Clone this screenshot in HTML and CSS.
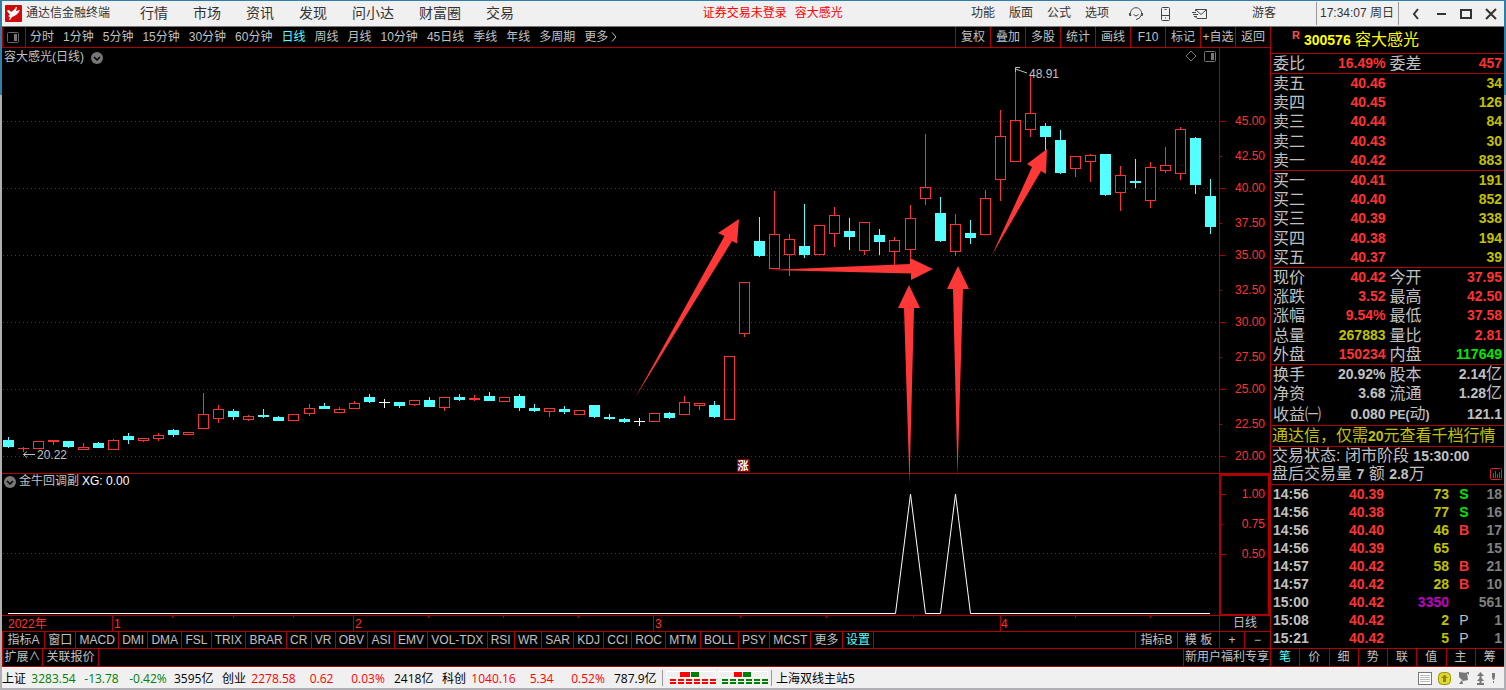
FILE: index.html
```html
<!DOCTYPE html>
<html lang="zh-CN">
<head>
  <meta charset="UTF-8">
  <meta name="viewport" content="width=device-width, initial-scale=1.0">
  <title>通达信金融终端</title>
  <link rel="stylesheet" href="styles.css">
</head>
<body>
  <header class="titlebar">
    <svg class="logo" viewBox="0 0 17 17" width="17" height="17">
      <rect width="17" height="17" rx="1" fill="#cf0a0a"/>
      <path d="M2 6 C3 4 5 5 6 7 C8 6 10 4 11 2 L12 2 L11 6 L15 5 C13 9 10 11 7 12 L5 15 L4 15 L5 12 L3 11 L5 10 Z" fill="#fff"/>
    </svg>
    <span class="app-name">通达信金融终端</span>
    <nav class="menu">
      <a href="#">行情</a>
      <a href="#">市场</a>
      <a href="#">资讯</a>
      <a href="#">发现</a>
      <a href="#">问小达</a>
      <a href="#">财富圈</a>
      <a href="#">交易</a>
    </nav>
    <div class="notice"><span>证券交易未登录</span><span>容大感光</span></div>
    <nav class="tools">
      <a href="#">功能</a>
      <a href="#">版面</a>
      <a href="#">公式</a>
      <a href="#">选项</a>
    </nav>
    <div class="quick">
      <button aria-label="客服">
        <svg viewBox="0 0 14 14" width="14" height="14" fill="none" stroke="#444">
          <path d="M2 8.500 A5.500 5.500 0 1 1 12 8.500 Q11 12 7 12.500"/>
          <path d="M0.500 6 V8.500 H2 M13.500 6 V8.500 H12 M4.500 7.500 Q7 10.500 9.500 7.500"/>
        </svg>
      </button>
      <button aria-label="手机">
        <svg viewBox="0 0 14 14" width="14" height="14" fill="none" stroke="#444">
          <rect x="2.500" y="0.500" width="8" height="13" rx="1"/>
          <path d="M3 8.500 H10 M5.500 2.500 H7.500 M6 11 H7"/>
        </svg>
      </button>
      <button class="mail" aria-label="消息">
        <svg viewBox="0 0 16 14" width="16" height="14" fill="none" stroke="#444">
          <path d="M3.500 4 V2.500 H14.500 V11.500 H5 L3 9.500 M4 3 L9 7.500 L14 3 M0 5.500 H4 M1 7.500 H6 M2 9.500 H5"/>
        </svg>
      </button>
    </div>
    <a href="#" class="user">游客</a>
    <span class="clock">17:34:07 周日</span>
    <div class="window-buttons">
      <button aria-label="收起"><svg viewBox="0 0 14 14" width="14" height="14"><path d="M9 2 L5 7 L9 12" fill="none" stroke="#333" stroke-width="2"/></svg></button>
      <button aria-label="最小化"><svg viewBox="0 0 14 14" width="14" height="14"><path d="M3 7 H12" stroke="#333" stroke-width="2"/></svg></button>
      <button aria-label="最大化"><svg viewBox="0 0 14 14" width="14" height="14"><rect x="2" y="3" width="10" height="8" fill="none" stroke="#333" stroke-width="2"/></svg></button>
      <button aria-label="关闭"><svg viewBox="0 0 14 14" width="14" height="14"><path d="M2 2 L12 12 M12 2 L2 12" stroke="#333" stroke-width="2"/></svg></button>
    </div>
  </header>

  <main class="workspace">
    <section class="chart-side">
      <div class="period-bar">
        <button class="layout-toggle" aria-label="侧栏">
          <svg viewBox="0 0 13 11" width="13" height="11"><rect x="0.500" y="0.500" width="11" height="10" rx="1" fill="none" stroke="#666"/><rect x="7" y="2" width="3" height="7" fill="#777"/></svg>
        </button>
        <div class="periods">
          <button>分时</button>
          <button>1分钟</button>
          <button>5分钟</button>
          <button>15分钟</button>
          <button>30分钟</button>
          <button>60分钟</button>
          <button class="active">日线</button>
          <button>周线</button>
          <button>月线</button>
          <button>10分钟</button>
          <button>45日线</button>
          <button>季线</button>
          <button>年线</button>
          <button>多周期</button>
          <button>更多<svg viewBox="0 0 8 10" width="8" height="10"><path d="M2 0.500 L6 5 L2 9.500" fill="none" stroke="#c0c0c0"/></svg></button>
        </div>
        <div class="chart-tools">
          <button>复权</button>
          <button>叠加</button>
          <button>多股</button>
          <button>统计</button>
          <button>画线</button>
          <button>F10</button>
          <button>标记</button>
          <button>+自选</button>
          <button>返回</button>
        </div>
      </div>

      <div class="charts">
        <div class="plot price-plot">
          <div class="legend">
            <span>容大感光(日线)</span>
            <button aria-label="展开"><svg viewBox="0 0 12 12" width="12" height="12"><circle cx="6" cy="6" r="6" fill="#777"/><path d="M3 5 L6 8 L9 5" fill="none" stroke="#000" stroke-width="1.500"/></svg></button>
          </div>
          <div class="corner">
            <button aria-label="标记"><svg viewBox="0 0 12 12" width="12" height="12"><path d="M6 1 L11 6 L6 11 L1 6 Z" fill="none" stroke="#777"/></svg></button>
            <button aria-label="侧栏"><svg viewBox="0 0 13 11" width="13" height="11"><rect x="0.500" y="0.500" width="11" height="10" rx="1" fill="none" stroke="#777"/><rect x="7" y="2" width="3" height="7" fill="#777"/></svg></button>
          </div>
          <svg class="canvas" viewBox="2 48 1217 425">
            <g class="grid">
              <path d="M3 121.500 H1218"/>
              <path d="M3 188.500 H1218"/>
              <path d="M3 255.500 H1218"/>
              <path d="M3 322.500 H1218"/>
              <path d="M3 389.500 H1218"/>
              <path d="M3 456.500 H1218"/>
            </g>
            <g id="candles"></g>
            <g class="pointer">
              <path d="M35 454.500 H23.500 M27 451.500 L23.500 454.500 L27 457.500"/>
              <path d="M1027 73 L1015.500 69 M1020 67.500 H1015.500 V72"/>
              <text x="37" y="459">20.22</text>
              <text x="1029" y="78">48.91</text>
            </g>
            <rect x="737" y="459" width="13" height="13" fill="#7c0000"/>
            <text class="badge" x="743" y="470">涨</text>
            <g class="arrows">
              <path d="M635 398 L724.500 236 L718 233 L739 219 L737 243.500 L732 241 Z"/>
              <path d="M769 270 L910 264 L910 258 L933 269 L911 280 L911 273.500 Z"/>
              <path d="M909.500 484 L904 308 L898 308 L909 285 L920 308 L914 308 Z"/>
              <path d="M957.500 476 L953 289 L947 289 L958 266 L969 289 L963 289 Z"/>
              <path d="M992 255 L1032 167 L1027 164 L1047 149 L1046 174 L1041 171 Z"/>
            </g>
          </svg>
        </div>
        <div class="axis price-axis">
          <span>45.00</span>
          <span>42.50</span>
          <span>40.00</span>
          <span>37.50</span>
          <span>35.00</span>
          <span>32.50</span>
          <span>30.00</span>
          <span>27.50</span>
          <span>25.00</span>
          <span>22.50</span>
          <span>20.00</span>
        </div>

        <div class="plot signal-plot">
          <div class="legend">
            <button aria-label="展开"><svg viewBox="0 0 12 12" width="12" height="12"><circle cx="6" cy="6" r="6" fill="#777"/><path d="M3 5 L6 8 L9 5" fill="none" stroke="#000" stroke-width="1.500"/></svg></button>
            <span>金牛回调副</span>
            <span class="value">XG: 0.00</span>
          </div>
          <svg class="canvas" viewBox="2 474 1217 141">
            <g class="grid"><path d="M3 553.500 H1218"/></g>
            <path class="signal" d="M8 613.500 H895.500 L910.500 494 L925.500 613.500 H940.500 L955.500 494 L970.500 613.500 H1210"/>
          </svg>
        </div>
        <div class="axis signal-axis">
          <span>1.00</span>
          <span>0.75</span>
          <span>0.50</span>
        </div>

        <div class="dates">
          <svg class="canvas" viewBox="2 616 1217 15">
            <path d="M112.500 616 V631 M353.500 616 V631 M653.500 616 V631 M1000.500 616 V631"/>
            <path d="M172.500 616 V618 M233.500 616 V618 M293.500 616 V618 M428.500 616 V618 M503.500 616 V618 M578.500 616 V618 M740.500 616 V618 M826.500 616 V618 M913.500 616 V618 M1075.500 616 V618 M1150.500 616 V618"/>
            <text x="8" y="628">2022年</text>
            <text x="114" y="628">1</text>
            <text x="355" y="628">2</text>
            <text x="655" y="628">3</text>
            <text x="1001" y="628">4</text>
          </svg>
        </div>
        <div class="axis period-name">日线</div>
      </div>

      <div class="tab-row">
        <button class="group">指标A</button>
        <div class="indicators">
          <button>窗口</button>
          <button>MACD</button>
          <button>DMI</button>
          <button>DMA</button>
          <button>FSL</button>
          <button>TRIX</button>
          <button>BRAR</button>
          <button>CR</button>
          <button>VR</button>
          <button>OBV</button>
          <button>ASI</button>
          <button>EMV</button>
          <button>VOL-TDX</button>
          <button>RSI</button>
          <button>WR</button>
          <button>SAR</button>
          <button>KDJ</button>
          <button>CCI</button>
          <button>ROC</button>
          <button>MTM</button>
          <button>BOLL</button>
          <button>PSY</button>
          <button>MCST</button>
          <button>更多</button>
          <button class="active">设置</button>
        </div>
        <div class="tab-end">
          <button class="group">指标B</button>
          <button class="group">模 板</button>
          <button class="zoom">+</button>
          <button class="zoom">−</button>
        </div>
      </div>
      <div class="tab-row extra">
        <button class="expand">扩展∧</button>
        <button class="related">关联报价</button>
        <div class="tab-end"><a href="#">新用户福利专享</a></div>
      </div>
    </section>

    <aside class="quote">
      <h1><sup>R</sup><b>300576</b> 容大感光</h1>
      <table class="block ratio">
        <tr><th>委比</th><td>16.49%</td><th>委差</th><td>457</td></tr>
      </table>
      <table class="block book">
        <tr><th>卖五</th><td>40.46</td><th></th><td class="vol">34</td></tr>
        <tr><th>卖四</th><td>40.45</td><th></th><td class="vol">126</td></tr>
        <tr><th>卖三</th><td>40.44</td><th></th><td class="vol">84</td></tr>
        <tr><th>卖二</th><td>40.43</td><th></th><td class="vol">30</td></tr>
        <tr><th>卖一</th><td>40.42</td><th></th><td class="vol">883</td></tr>
      </table>
      <table class="block book">
        <tr><th>买一</th><td>40.41</td><th></th><td class="vol">191</td></tr>
        <tr><th>买二</th><td>40.40</td><th></th><td class="vol">852</td></tr>
        <tr><th>买三</th><td>40.39</td><th></th><td class="vol">338</td></tr>
        <tr><th>买四</th><td>40.38</td><th></th><td class="vol">194</td></tr>
        <tr><th>买五</th><td>40.37</td><th></th><td class="vol">39</td></tr>
      </table>
      <table class="block book">
        <tr><th>现价</th><td>40.42</td><th>今开</th><td>37.95</td></tr>
        <tr><th>涨跌</th><td>3.52</td><th>最高</th><td>42.50</td></tr>
        <tr><th>涨幅</th><td>9.54%</td><th>最低</th><td>37.58</td></tr>
        <tr><th>总量</th><td class="vol">267883</td><th>量比</th><td>2.81</td></tr>
        <tr><th>外盘</th><td>150234</td><th>内盘</th><td class="down">117649</td></tr>
      </table>
      <table class="block fund">
        <tr><th>换手</th><td>20.92%</td><th>股本</th><td>2.14<span>亿</span></td></tr>
        <tr><th>净资</th><td>3.68</td><th>流通</th><td>1.28<span>亿</span></td></tr>
        <tr><th>收益㈠</th><td>0.080</td><th><small>PE(</small>动<small>)</small></th><td>121.1</td></tr>
      </table>
      <a href="#" class="promo">通达信，仅需<b>20</b>元查看千档行情</a>
      <div class="status">
        <p><span>交易状态: 闭市阶段 <b>15:30:00</b></span></p>
        <p><span>盘后交易量 <b>7</b> 额 <b>2.8</b>万</span>
          <button aria-label="图表"><svg viewBox="0 0 12 12" width="12" height="12" fill="none" stroke="#e02020"><rect x="0.500" y="0.500" width="11" height="11" rx="1"/><path d="M3.500 10 V5 M5.500 10 V3 M7.500 10 V6 M9.500 10 V4"/></svg></button>
        </p>
      </div>
      <table class="ticks">
        <tr><th>14:56</th><td>40.39</td><td class="vol">73</td><td class="side down">S</td><td class="count">18</td></tr>
        <tr><th>14:56</th><td>40.38</td><td class="vol">77</td><td class="side down">S</td><td class="count">16</td></tr>
        <tr><th>14:56</th><td>40.40</td><td class="vol">46</td><td class="side">B</td><td class="count">17</td></tr>
        <tr><th>14:56</th><td>40.39</td><td class="vol">65</td><td class="side"></td><td class="count">15</td></tr>
        <tr><th>14:57</th><td>40.42</td><td class="vol">58</td><td class="side">B</td><td class="count">21</td></tr>
        <tr><th>14:57</th><td>40.42</td><td class="vol">28</td><td class="side">B</td><td class="count">10</td></tr>
        <tr><th>15:00</th><td>40.42</td><td class="vol big">3350</td><td class="side"></td><td class="count">561</td></tr>
        <tr><th>15:08</th><td>40.42</td><td class="vol">2</td><td class="side after">P</td><td class="count">1</td></tr>
        <tr><th>15:21</th><td>40.42</td><td class="vol">5</td><td class="side after">P</td><td class="count">1</td></tr>
      </table>
      <nav class="quote-tabs">
        <button class="active">笔</button>
        <button>价</button>
        <button>细</button>
        <button>势</button>
        <button>联</button>
        <button>值</button>
        <button>主</button>
        <button>筹</button>
      </nav>
    </aside>
  </main>

  <footer class="statusbar">
    <div class="index fall"><span>上证</span><b>3283.54</b><b>-13.78</b><b>-0.42%</b><span>3595亿</span></div>
    <div class="index"><span>创业</span><b>2278.58</b><b>0.62</b><b>0.03%</b><span>2418亿</span></div>
    <div class="index"><span>科创</span><b>1040.16</b><b>5.34</b><b>0.52%</b><span>787.9亿</span></div>
    <div class="lights">
      <svg viewBox="0 0 104 16" width="104" height="16">
        <g fill="none" stroke="#fff"><rect x="1.500" y="1.500" width="49" height="6"/><rect x="53.500" y="1.500" width="49" height="6"/></g>
        <path d="M15 2 h10 v5 h-10 z M69 2 h8 v5 h-8 z" fill="#f00"/>
        <path d="M26 2 h8 v5 h-8 z M78 2 h8 v5 h-8 z" fill="#008000"/>
        <path d="M5 10 H52 M5 13 H52" stroke="#f00" stroke-width="2" stroke-dasharray="6 2"/>
        <path d="M57 10 H104 M57 13 H104" stroke="#008000" stroke-width="2" stroke-dasharray="6 2"/>
      </svg>
    </div>
    <span class="server">上海双线主站5</span>
    <div class="tray">
      <svg viewBox="0 0 14 13" width="14" height="13"><rect x="0.500" y="0.500" width="13" height="12" fill="#fff" stroke="#777"/><path d="M2 3.500 H12 M2 5.500 H12 M2 7.500 H12 M2 9.500 H12" stroke="#bbb"/></svg>
      <svg viewBox="0 0 13 13" width="13" height="13"><rect x="0.500" y="0.500" width="12" height="12" rx="4" fill="#e0d832" stroke="#9a9200"/><path d="M6.500 2.500 L10 6 H8 V10 H5 V6 H3 Z" fill="#8f8800"/></svg>
      <svg viewBox="0 0 13 13" width="13" height="13"><path d="M2 0 L10 1 L11 8 L6 9 L2 5 Z M5 8 L2 12 H6 Z M9 0 H12 V3" fill="#777"/></svg>
      <svg viewBox="0 0 9 13" width="9" height="13"><path d="M4.500 0 L8 4 H5.500 V6 L8 9 H5.500 V11 H8 V13 H1 V11 H3.500 V9 H1 L3.500 6 V4 H1 Z" fill="#777"/></svg>
      <svg viewBox="0 0 5 13" width="5" height="13"><path d="M1 1 H4 V5 L3 8 H2 L1 5 Z M2 9 H3 V11 H2 Z" fill="#777"/></svg>
    </div>
  </footer>

  <script>
    // [kind, high, body top, body bottom, low] - u: up, d: down, x: unchanged
    const candles = [
      ["d", 437, 440, 447, 448], ["u", 447, 448, 449, 452], ["u", 441, 441, 449, 449], ["u", 440, 440, 442, 445],
      ["d", 441, 441, 447, 448], ["u", 443, 447, 450, 450], ["d", 442, 443, 448, 448], ["u", 439, 440, 450, 450],
      ["d", 433, 436, 440, 444], ["u", 438, 438, 441, 442], ["u", 433, 435, 439, 441], ["d", 429, 430, 435, 437],
      ["u", 432, 432, 435, 435], ["u", 393, 414, 429, 429], ["u", 405, 409, 419, 423], ["d", 409, 411, 417, 420],
      ["u", 415, 416, 420, 421], ["d", 409, 415, 417, 418], ["d", 416, 417, 421, 421], ["u", 414, 414, 421, 421],
      ["u", 404, 408, 414, 416], ["d", 403, 406, 409, 409], ["u", 407, 409, 413, 413], ["u", 401, 403, 409, 409],
      ["d", 394, 397, 402, 403], ["x", 399, 402, 403, 408], ["d", 402, 402, 406, 408], ["u", 400, 400, 405, 406],
      ["d", 397, 400, 407, 407], ["u", 397, 397, 408, 411], ["d", 394, 397, 400, 401], ["u", 395, 398, 400, 401],
      ["d", 392, 396, 401, 401], ["u", 397, 397, 402, 402], ["d", 394, 396, 408, 411], ["d", 404, 408, 411, 412],
      ["u", 408, 408, 412, 417], ["d", 406, 409, 412, 414], ["u", 410, 410, 415, 415], ["d", 405, 405, 417, 418],
      ["d", 414, 417, 419, 420], ["d", 418, 419, 422, 423], ["x", 418, 421, 422, 426], ["u", 413, 413, 422, 422],
      ["d", 412, 413, 418, 419], ["u", 396, 402, 415, 415], ["u", 403, 403, 406, 410], ["d", 401, 405, 417, 418],
      ["u", 356, 356, 420, 420], ["u", 282, 282, 334, 337], ["d", 217, 241, 256, 257], ["u", 191, 234, 269, 269],
      ["u", 234, 239, 255, 276], ["d", 204, 246, 255, 258], ["u", 225, 225, 255, 255], ["u", 207, 215, 234, 247],
      ["d", 218, 231, 237, 250], ["u", 222, 222, 251, 255], ["d", 229, 235, 242, 255], ["u", 237, 240, 252, 265],
      ["u", 205, 218, 250, 258], ["u", 134, 187, 199, 205], ["d", 197, 213, 241, 242], ["u", 214, 224, 252, 256],
      ["d", 220, 233, 238, 244], ["u", 190, 198, 235, 235], ["u", 110, 136, 180, 201], ["u", 71, 120, 162, 162],
      ["u", 75, 113, 130, 137], ["d", 123, 126, 137, 150], ["d", 130, 140, 173, 174], ["u", 156, 156, 169, 177],
      ["u", 154, 155, 162, 182], ["d", 154, 154, 195, 196], ["u", 166, 175, 193, 211], ["d", 159, 181, 183, 188],
      ["u", 162, 167, 201, 208], ["u", 147, 165, 171, 173], ["u", 127, 129, 174, 180], ["d", 137, 138, 185, 194],
      ["d", 179, 196, 227, 234]
    ];
    const colors = { u: "#ff3232", d: "#54ffff", x: "#ffffff" };

    function drawCandles() {
      const step = 1202 / 80;
      let out = "";
      candles.forEach(([kind, high, top, bottom, low], i) => {
        const x = Math.round(8 + i * step);
        const color = colors[kind];
        out += `<path d="M${x + 0.5} ${high} V${top} M${x + 0.5} ${bottom} V${low}" stroke="${color}"/>`;
        if (kind === "u" && bottom - top > 2) {
          out += `<rect x="${x - 4.5}" y="${top + 0.5}" width="10" height="${bottom - top - 1}" fill="none" stroke="${color}"/>`;
        } else {
          out += `<rect x="${x - 5}" y="${top}" width="11" height="${bottom - top}" fill="${color}"/>`;
        }
      });
      document.getElementById("candles").innerHTML = out;
    }

    drawCandles();
  </script>
</body>
</html>
```
FILE: styles.css
```css
* {
  box-sizing: border-box;
}

body {
  font-family: "Liberation Sans", "Noto Sans CJK SC", sans-serif;
  font-size: 12px;
  line-height: 15px;
  color: #c0c0c0;
  background: linear-gradient(#2f7fa8 95px, #b0b0b4 95px);
  margin: 0;
  padding: 1px 2px 2px;
  height: 100vh;
  min-height: 690px;
  display: flex;
  flex-direction: column;
}

button {
  font: inherit;
  color: inherit;
  background: none;
  border: none;
  margin: 0;
  padding: 0;
  cursor: pointer;
  white-space: nowrap;
}

a {
  color: inherit;
  text-decoration: none;
  white-space: nowrap;
}

svg {
  display: block;
}

.active {
  color: #54ffff;
}

/* Title bar */
.titlebar {
  flex: none;
  display: flex;
  align-items: center;
  height: 26px;
  background: #f0f0f0;
  border-bottom: 1px solid #777;
  color: #333;
  padding-left: 3px;
}

.app-name {
  margin-left: 4px;
}

.menu {
  display: flex;
  gap: 25px;
  margin-left: 30px;
  font-size: 14px;
}

.notice {
  display: flex;
  gap: 8px;
  margin-left: auto;
  margin-right: 128px;
  color: #f00;
}

.tools {
  display: flex;
  gap: 14px;
}

.quick {
  display: flex;
  gap: 16px;
  margin-left: 20px;
}

.quick .mail {
  margin-left: 3px;
}

.user {
  margin-left: 44px;
}

.clock {
  margin-left: 40px;
  padding: 4px 4px 4px 3px;
  border: solid #999;
  border-width: 0 1px;
}

.window-buttons {
  display: flex;
  gap: 11px;
  margin: 0 6px 0 10px;
}

/* Workspace */
.workspace {
  flex: 1;
  min-height: 0;
  display: flex;
  background: #000;
  border-bottom: 1px solid #b00000;
}

.chart-side {
  flex: 1;
  min-width: 0;
  display: flex;
  flex-direction: column;
}

.period-bar {
  flex: none;
  display: flex;
  height: 21px;
  border-bottom: 1px solid #b00000;
}

.layout-toggle {
  width: 24px;
  padding-left: 4px;
  border: solid #b00000;
  border-width: 0 1px;
}

.periods {
  display: flex;
  gap: 9px;
  margin-left: 4px;
}

.periods button {
  display: flex;
  align-items: center;
}

.periods svg {
  margin-left: 2px;
}

.chart-tools {
  display: flex;
  margin-left: auto;
}

.chart-tools button {
  width: 35px;
  border-left: 1px solid #b00000;
}

/* Charts */
.charts {
  flex: 1;
  min-height: 0;
  display: grid;
  grid-template-columns: 1fr 51px;
  grid-template-rows: minmax(0, 426fr) minmax(0, 142fr) 16px;
}

.plot {
  position: relative;
  min-height: 0;
  border-bottom: 1px solid #b00000;
}

.canvas {
  width: 100%;
  height: 100%;
  overflow: visible;
}

.legend,
.corner {
  position: absolute;
  top: 2px;
  left: 2px;
  display: flex;
  align-items: center;
  gap: 7px;
}

.corner {
  left: auto;
  right: 2px;
}

.signal-plot .legend {
  top: 0;
  gap: 3px;
}

.legend .value {
  color: #fff;
}

.grid path {
  stroke: #a01010;
  stroke-dasharray: 1 3;
}

.pointer path {
  fill: none;
  stroke: #c0c0c0;
}

.pointer text {
  fill: #c0c0c0;
}

.badge {
  fill: #fff;
  font-size: 11px;
  font-weight: bold;
  text-anchor: middle;
}

.arrows path {
  fill: #fe3737;
}

.signal {
  fill: none;
  stroke: #fff;
}

.axis {
  border-left: 1px solid #b00000;
  color: #ff3232;
}

.axis span {
  display: flex;
  justify-content: flex-end;
  align-items: center;
  height: 15px;
  padding-right: 5px;
}

.axis span::before {
  content: "";
  width: 5px;
  height: 1px;
  margin-right: auto;
  background: #b00000;
}

.axis span:nth-child(even)::before {
  width: 2px;
}

.price-axis {
  display: grid;
  grid-template-rows: repeat(5, 35px 32px) 15px;
  padding-top: 66px;
  border-bottom: 1px solid #b00000;
}

.signal-axis {
  display: grid;
  grid-auto-rows: 30px;
  padding-top: 11px;
  border: 2px solid #b00000;
}

.signal-axis span {
  padding-right: 3px;
}

.dates {
  min-height: 0;
  border-bottom: 1px solid #b00000;
}

.dates path {
  stroke: #b00000;
}

.dates text {
  fill: #ff3232;
}

.period-name {
  color: #c0c0c0;
  text-align: center;
  border-bottom: 1px solid #b00000;
}

/* Indicator tabs */
.tab-row {
  flex: none;
  display: flex;
  height: 17px;
  border-bottom: 1px solid #b00000;
  border-left: 1px solid #b00000;
}

.tab-row button {
  border-right: 1px solid #b00000;
}

.group {
  width: 42px;
}

.indicators {
  display: flex;
  width: 829px;
}

.indicators button {
  flex: 1 1 auto;
  padding: 0 3px;
}

.tab-end {
  display: flex;
  margin-left: auto;
  border-left: 1px solid #b00000;
}

.zoom {
  width: 25px;
}

.tab-row .zoom:last-child {
  border-right: none;
}

.extra {
  height: 17px;
  border-bottom: none;
  line-height: 17px;
}

.expand {
  width: 40px;
}

.related {
  width: 56px;
}

.extra a {
  padding: 0 1px;
}

/* Quote panel */
.quote {
  flex: 0 0 234px;
  display: flex;
  flex-direction: column;
  border-left: 1px solid #b00000;
  font-size: 16px;
}

.quote b,
.quote td {
  font-size: 14px;
  font-weight: bold;
}

.quote h1 {
  height: 27px;
  margin: 0;
  padding-left: 21px;
  border-bottom: 1px solid #b00000;
  color: #ff0;
  font-size: 16px;
  font-weight: normal;
  line-height: 26px;
}

.quote sup {
  margin-right: 4px;
  color: #ff5050;
  font-size: 11px;
  font-weight: bold;
  line-height: 11px;
}

.quote table {
  width: 100%;
  table-layout: fixed;
  border-spacing: 0;
}

.quote th,
.quote td {
  height: 19px;
  padding: 0 2px;
  line-height: 19px;
  white-space: nowrap;
}

.quote th {
  font-weight: normal;
  text-align: left;
}

.quote td {
  color: #ff3232;
  text-align: right;
}

.block {
  height: 97px;
  border-bottom: 1px solid #b00000;
}

.quote .block th {
  width: 50px;
}

.quote .ratio {
  height: 20px;
}

.quote .fund {
  height: 61px;
}

.fund small {
  font-size: 12px;
  font-weight: bold;
}

.quote .fund td {
  color: #c0c0c0;
}

.fund span {
  font-size: 16px;
  font-weight: normal;
  line-height: 16px;
}

.quote .vol {
  color: #c0c000;
}

.quote .down {
  color: #00e600;
}

.promo {
  height: 21px;
  padding-left: 1px;
  border-bottom: 1px solid #b00000;
  color: #c0c000;
  line-height: 20px;
}

.status {
  height: 38px;
  padding-left: 1px;
  border-bottom: 1px solid #b00000;
}

.status p {
  display: flex;
  align-items: center;
  height: 18px;
  margin: 0;
  line-height: 18px;
}

.status button {
  margin-left: auto;
  margin-right: 2px;
}

.ticks {
  margin-bottom: auto;
}

.quote .ticks th,
.quote .ticks td {
  height: 18px;
  line-height: 18px;
}

.quote .ticks th {
  width: 50px;
  font-size: 14px;
  font-weight: bold;
}

.ticks td:nth-child(2),
.ticks td:nth-child(3) {
  width: 65px;
}

.quote .ticks .big {
  color: #c000c0;
}

.quote .ticks .side {
  width: 26px;
  text-align: center;
}

.quote .ticks .after {
  color: #c0c0c0;
  font-weight: normal;
}

.quote .ticks .count {
  padding-left: 0;
  color: #808080;
}

.quote-tabs {
  flex: none;
  display: flex;
  height: 18px;
  border-top: 1px solid #b00000;
  font-size: 12px;
}

.quote-tabs button {
  flex: 1;
  border-right: 1px solid #b00000;
}

.quote-tabs button:last-child {
  border-right: none;
}

/* Status bar */
.statusbar {
  flex: none;
  display: flex;
  align-items: center;
  height: 21px;
  background: #f0f0f0;
  border-top: 1px solid #fff;
  color: #000;
  font-family: "Open Sans", "Noto Sans CJK SC", sans-serif;
}

.index {
  display: grid;
  grid-template-columns: 28px 47px 49px 44px 52px;
}

.index b {
  color: #f00;
  font-weight: normal;
  text-align: center;
}

.index span:last-child {
  padding-left: 4px;
}

.fall b {
  color: #008000;
}

.lights {
  padding: 0 2px;
  border: solid #999;
  border-width: 0 1px;
}

.server {
  margin-left: 4px;
}

.tray {
  display: flex;
  gap: 6px;
  margin-left: auto;
  margin-right: 8px;
}
```
